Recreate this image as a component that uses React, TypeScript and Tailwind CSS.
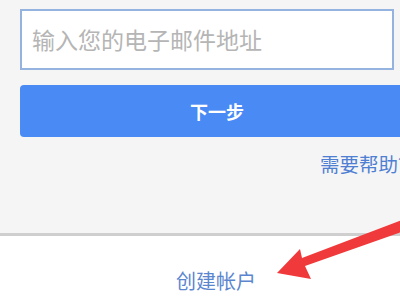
import React from 'react'

const font = { fontFamily: '"Noto Sans CJK SC", "Noto Sans", sans-serif' }

export default function App() {
  return (
    <div className="relative w-[400px] h-[300px] overflow-hidden bg-white" style={font}>
      {/* login card */}
      <div className="h-[236px] bg-[#f5f5f5] border-b-[3px] border-[#cfcfcf] pl-[20px] pt-[9px] overflow-hidden">
        <div className="w-[374px] h-[61px] border-2 border-[#94b3de] bg-white flex items-center pl-[10px]">
          <span className="text-[23px] text-[#b5b5b5] whitespace-nowrap">输入您的电子邮件地址</span>
        </div>
        <button className="mt-[15px] w-[394px] h-[52px] rounded-[4px] bg-[#4a8af4] text-white text-[18px] font-bold flex items-center justify-center">
          下一步
        </button>
        <div className="mt-[14px] ml-[300px] text-[19.5px] text-[#4f7fd2] whitespace-nowrap leading-[26px]">需要帮助？</div>
      </div>

      <div className="flex justify-center pl-[32px] mt-[33px]">
        <span className="text-[20px] text-[#5b86cf] leading-[24px]">创建帐户</span>
      </div>

      {/* red arrow annotation */}
      <svg className="absolute left-0 top-0" width="400" height="300" viewBox="0 0 400 300">
        <polygon points="277,273 300,249 302,258 402,220 404,231 305,266 311,279" fill="#f0393a" />
      </svg>
    </div>
  )
}
